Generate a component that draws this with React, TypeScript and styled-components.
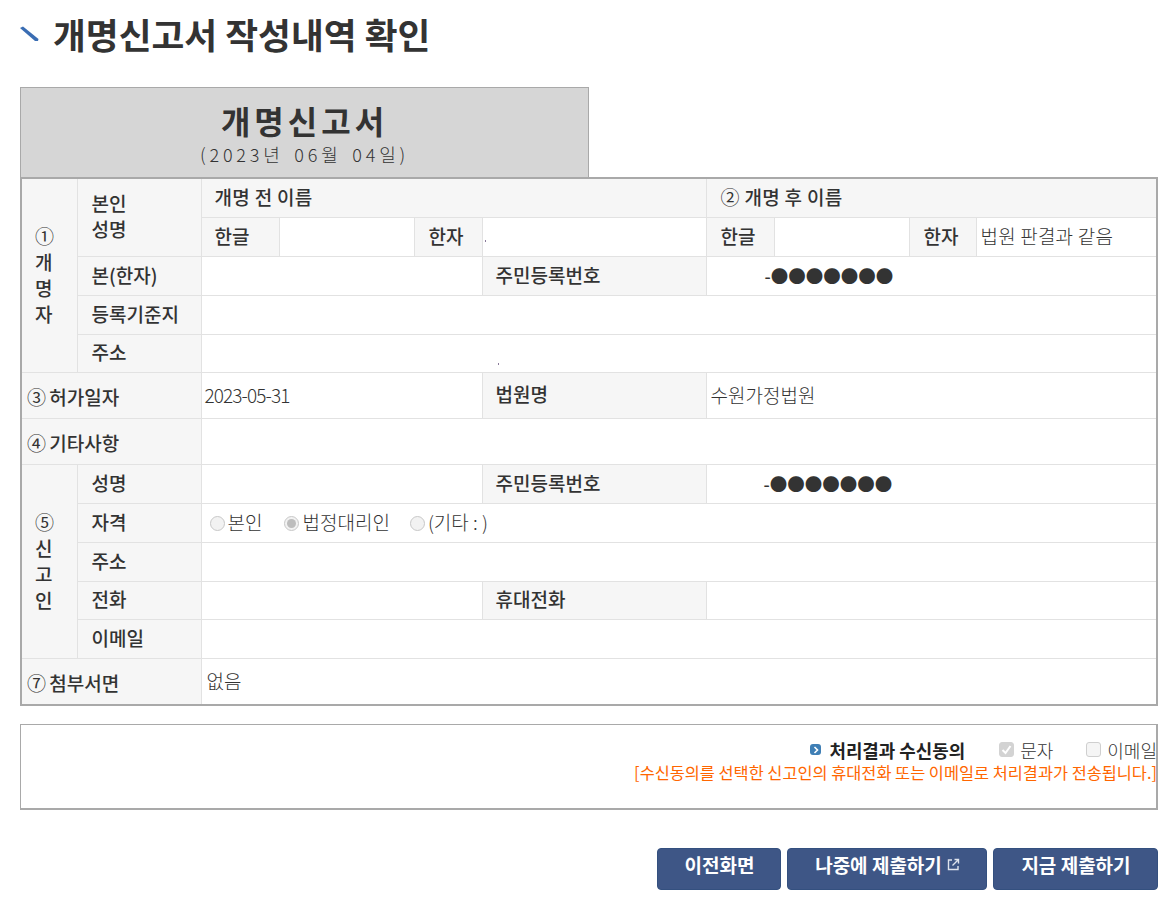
import styled, { createGlobalStyle } from 'styled-components';

const GlobalStyle = createGlobalStyle`
  html, body {
    margin: 0;
    padding: 0;
    background: #fff;
  }
  body {
    font-family: "Noto Sans CJK KR", "Noto Sans", sans-serif;
    color: #333;
  }
`;

const Page = styled.div`
  width: 1174px;
  height: 898px;
  overflow: hidden;
  box-sizing: border-box;
  padding: 9px 16px 0 20px;
`;

const Title = styled.h2`
  display: flex;
  align-items: center;
  gap: 14px;
  height: 50px;
  margin: 0 0 28px;
  font-size: 35.7px;
  font-weight: 700;
  line-height: 50px;
  color: #333;
  & > svg {
    flex: none;
  }
`;

const FormHead = styled.div`
  box-sizing: border-box;
  width: 569px;
  height: 90px;
  padding-top: 11px;
  background: #d6d6d6;
  border: 1px solid #a9a9a9;
  border-bottom: 0;
  text-align: center;
`;

const FormName = styled.div`
  font-size: 32px;
  line-height: 42px;
  font-weight: 700;
  letter-spacing: 4px;
`;

const FormDate = styled.div`
  font-size: 18px;
  line-height: 26px;
  font-weight: 300;
  letter-spacing: 3.8px;
  word-spacing: 3px;
`;

const FormTable = styled.table`
  box-sizing: border-box;
  width: 1138px;
  table-layout: fixed;
  border-collapse: collapse;
  border: 2px solid #a9a9a9;
  font-size: 19px;
`;

const Row = styled.tr<{ $h?: number }>`
  height: ${p => p.$h || 39}px;
`;

const Th = styled.th<{ $pad?: number; $drop?: number; $wide?: boolean }>`
  box-sizing: border-box;
  padding: ${p => p.$drop ?? 0}px 0 2px ${p => p.$pad ?? 14}px;
  background: #f6f6f6;
  border: 1px solid #e2e2e2;
  font-weight: 500;
  line-height: 26px;
  letter-spacing: ${p => (p.$wide ? '0.3px' : '0')};
  text-align: left;
  color: #333;
  overflow: hidden;
  white-space: nowrap;
`;

const SumTh = styled(Th)`
  word-spacing: -1px;
`;

const Td = styled.td<{ $pad?: number }>`
  box-sizing: border-box;
  padding: 0 0 2px ${p => p.$pad ?? 4}px;
  background: #fff;
  border: 1px solid #e2e2e2;
  font-weight: 300;
  font-size: 19px;
  white-space: nowrap;
  color: #333;
`;

const Mask = styled.span<{ $pad: number }>`
  padding-left: ${p => p.$pad}px;
  font-weight: 500;
  font-size: 17.5px;
  line-height: 26px;
`;

const DateText = styled.span`
  letter-spacing: -0.9px;
`;

const SameText = styled.span`
  letter-spacing: 0.2px;
`;

const Speck = styled.i<{ $left: number; $top: number }>`
  display: block;
  width: 1px;
  height: 2px;
  margin: ${p => p.$top}px 0 0 ${p => p.$left}px;
  background: #8a7a9a;
`;

const Circled = styled.span`
  font-weight: 400;
`;

const Radios = styled.div`
  display: flex;
  align-items: center;
  padding-left: 4px;
`;

const RadioLabel = styled.label<{ $gap: number }>`
  display: flex;
  align-items: center;
  margin-right: ${p => p.$gap}px;
`;

const RadioDot = styled.span<{ $on?: boolean }>`
  box-sizing: border-box;
  display: inline-flex;
  align-items: center;
  justify-content: center;
  width: 15px;
  height: 15px;
  margin: 3px 3px 0 0;
  border: 1px solid #c8c8c8;
  border-radius: 50%;
  background: #f2f2f2;
  &::after {
    content: '';
    display: ${p => (p.$on ? 'block' : 'none')};
    width: 9px;
    height: 9px;
    border-radius: 50%;
    background: #bdbdbd;
  }
`;

const AgreeBox = styled.div`
  box-sizing: border-box;
  height: 86px;
  margin-top: 18px;
  padding: 10px 0 0;
  border: 2px solid #a9a9a9;
  border-width: 1px 2px 2px 1px;
  text-align: right;
`;

const AgreeLine = styled.div`
  display: flex;
  justify-content: flex-end;
  align-items: center;
  height: 29px;
  margin-right: -1px;
  font-size: 18px;
`;

const AgreeTitle = styled.strong`
  display: flex;
  align-items: center;
  gap: 8px;
  margin-right: 34px;
  font-weight: 700;
  font-size: 17.9px;
  color: #222;
`;

const Bullet = styled.span`
  display: inline-flex;
  align-items: center;
  justify-content: center;
  width: 11px;
  height: 11px;
  border-radius: 3px;
  background: #3f7fb5;
`;

const CheckItem = styled.label<{ $gap?: number }>`
  display: flex;
  align-items: center;
  gap: 6px;
  margin-right: ${p => p.$gap ?? 0}px;
  font-weight: 300;
  color: #333;
`;

const CheckBox = styled.span<{ $on?: boolean }>`
  box-sizing: border-box;
  display: inline-flex;
  align-items: center;
  justify-content: center;
  width: 15px;
  height: 15px;
  border-radius: 3px;
  border: 1px solid ${p => (p.$on ? '#d3d3d3' : '#cfcfcf')};
  background: ${p => (p.$on ? '#d3d3d3' : '#f5f5f5')};
`;

const Notice = styled.div`
  margin-right: -1px;
  font-size: 16.36px;
  line-height: 16px;
  font-weight: 400;
  color: #ff6600;
  white-space: nowrap;
`;

const Buttons = styled.div`
  display: flex;
  justify-content: flex-end;
  gap: 6px;
  margin-top: 38px;
`;

const Btn = styled.button<{ $w: number }>`
  display: inline-flex;
  align-items: center;
  justify-content: center;
  gap: 5px;
  box-sizing: border-box;
  width: ${p => p.$w}px;
  height: 42px;
  padding: 0 0 9px 1px;
  border: 1px solid #34507f;
  border-radius: 4px;
  background: #3e5686;
  color: #fff;
  font-family: inherit;
  font-size: 19px;
  font-weight: 700;
`;

export default function App() {
  return (
    <Page>
      <GlobalStyle />
      <Title>
        <svg width="19" height="16" viewBox="0 0 19 16">
          <path d="M0 2 L3 0.5 L18.5 13 L18 15 L15 15 Z" fill="#3a6db3" />
        </svg>
        개명신고서 작성내역 확인
      </Title>

      <FormHead>
        <FormName>개명신고서</FormName>
        <FormDate>(2023년 06월 04일)</FormDate>
      </FormHead>

      <FormTable>
        <colgroup>
          <col width="56" />
          <col width="124" />
          <col width="78" />
          <col width="135" />
          <col width="68" />
          <col width="224" />
          <col width="68" />
          <col width="135" />
          <col width="67" />
          <col />
        </colgroup>
        <tbody>
          <Row>
            <Th rowSpan={5} $pad={13} $drop={2}>
              <Circled>①</Circled>
              <br />개<br />명<br />자
            </Th>
            <Th rowSpan={2}>
              본인
              <br />
              성명
            </Th>
            <Th colSpan={4} $wide $pad={13}>
              개명 전 이름
            </Th>
            <Th colSpan={4} $wide>
              <Circled>②</Circled> 개명 후 이름
            </Th>
          </Row>
          <Row>
            <Th $pad={13}>한글</Th>
            <Td />
            <Th>한자</Th>
            <Td $pad={2}>
              <Speck $left={0} $top={10} />
            </Td>
            <Th>한글</Th>
            <Td />
            <Th>한자</Th>
            <Td>
              <SameText>법원 판결과 같음</SameText>
            </Td>
          </Row>
          <Row>
            <Th>본(한자)</Th>
            <Td colSpan={3} />
            <Th $pad={13}>주민등록번호</Th>
            <Td colSpan={4}>
              <Mask $pad={54}>-●●●●●●●</Mask>
            </Td>
          </Row>
          <Row>
            <Th>등록기준지</Th>
            <Td colSpan={8} />
          </Row>
          <Row $h={38}>
            <Th>주소</Th>
            <Td colSpan={8} $pad={0}>
              <Speck $left={296} $top={24} />
            </Td>
          </Row>
          <Row $h={46}>
            <SumTh colSpan={2} $pad={5} $drop={6}>
              <Circled>③</Circled> 허가일자
            </SumTh>
            <Td colSpan={3} $pad={3}>
              <DateText>2023-05-31</DateText>
            </Td>
            <Th $pad={13}>법원명</Th>
            <Td colSpan={4}>수원가정법원</Td>
          </Row>
          <Row $h={46}>
            <SumTh colSpan={2} $pad={5} $drop={6}>
              <Circled>④</Circled> 기타사항
            </SumTh>
            <Td colSpan={8} />
          </Row>
          <Row>
            <Th rowSpan={5} $pad={13} $drop={2}>
              <Circled>⑤</Circled>
              <br />신<br />고<br />인
            </Th>
            <Th>성명</Th>
            <Td colSpan={3} />
            <Th $pad={13}>주민등록번호</Th>
            <Td colSpan={4}>
              <Mask $pad={53}>-●●●●●●●</Mask>
            </Td>
          </Row>
          <Row>
            <Th>자격</Th>
            <Td colSpan={8}>
              <Radios>
                <RadioLabel $gap={22}>
                  <RadioDot />
                  본인
                </RadioLabel>
                <RadioLabel $gap={20}>
                  <RadioDot $on />
                  법정대리인
                </RadioLabel>
                <RadioLabel $gap={0}>
                  <RadioDot />
                  (기타 : )
                </RadioLabel>
              </Radios>
            </Td>
          </Row>
          <Row>
            <Th>주소</Th>
            <Td colSpan={8} />
          </Row>
          <Row $h={38}>
            <Th>전화</Th>
            <Td colSpan={3} />
            <Th $pad={13}>휴대전화</Th>
            <Td colSpan={4} />
          </Row>
          <Row>
            <Th>이메일</Th>
            <Td colSpan={8} />
          </Row>
          <Row $h={47}>
            <SumTh colSpan={2} $pad={5} $drop={6}>
              <Circled>⑦</Circled> 첨부서면
            </SumTh>
            <Td colSpan={8} $pad={5}>
              없음
            </Td>
          </Row>
        </tbody>
      </FormTable>

      <AgreeBox>
        <AgreeLine>
          <AgreeTitle>
            <Bullet>
              <svg width="8" height="8" viewBox="0 0 8 8">
                <path d="M2.5 1 L5.5 4 L2.5 7" stroke="#fff" strokeWidth="1.6" fill="none" />
              </svg>
            </Bullet>
            처리결과 수신동의
          </AgreeTitle>
          <CheckItem $gap={33}>
            <CheckBox $on>
              <svg width="11" height="11" viewBox="0 0 11 11">
                <path d="M1.5 6 L4.5 9 L9.5 2" stroke="#fff" strokeWidth="2" fill="none" />
              </svg>
            </CheckBox>
            문자
          </CheckItem>
          <CheckItem>
            <CheckBox />
            이메일
          </CheckItem>
        </AgreeLine>
        <Notice>[수신동의를 선택한 신고인의 휴대전화 또는 이메일로 처리결과가 전송됩니다.]</Notice>
      </AgreeBox>

      <Buttons>
        <Btn $w={124}>이전화면</Btn>
        <Btn $w={200}>
          나중에 제출하기
          <svg width="13" height="13" viewBox="0 0 13 13" fill="none" stroke="#dfe4ee" strokeWidth="1.4">
            <path d="M5 2 H1.5 V11.5 H11 V8" />
            <path d="M7.5 1.5 H11.5 V5.5 M11.5 1.5 L5.5 7.5" />
          </svg>
        </Btn>
        <Btn $w={165}>지금 제출하기</Btn>
      </Buttons>
    </Page>
  );
}
